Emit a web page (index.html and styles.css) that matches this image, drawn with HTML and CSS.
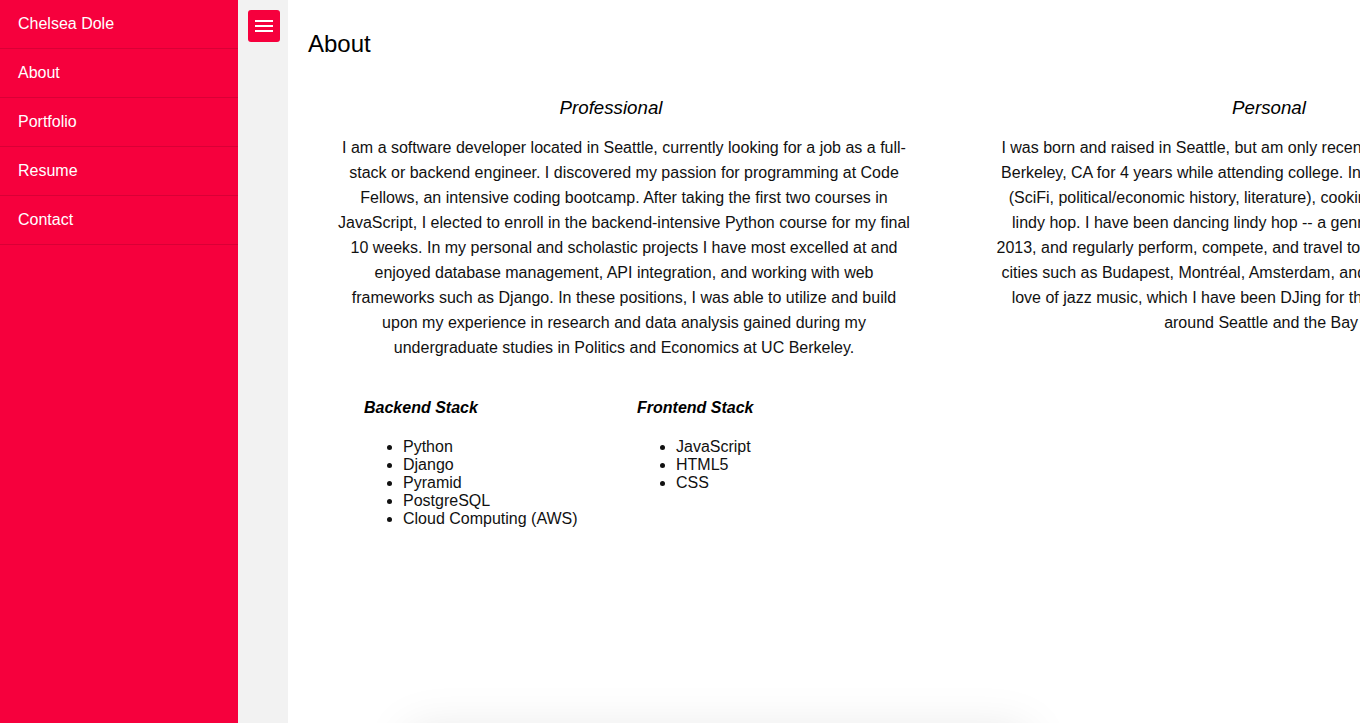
FILE: index.html
```html
<!DOCTYPE html>
<html lang="en">
<head>
<meta charset="utf-8">
<title>Chelsea Dole - About</title>
<link rel="stylesheet" href="styles.css">
</head>
<body>
<div class="layout">
  <nav class="sidebar">
    <a class="nav-item" href="#">Chelsea Dole</a>
    <a class="nav-item" href="#">About</a>
    <a class="nav-item" href="#">Portfolio</a>
    <a class="nav-item" href="#">Resume</a>
    <a class="nav-item" href="#">Contact</a>
  </nav>
  <div class="gutter">
    <button class="menu-btn" aria-label="Menu">
      <span class="bar"></span>
      <span class="bar"></span>
      <span class="bar"></span>
    </button>
  </div>
  <main class="main">
    <h1 class="page-title">About</h1>
    <div class="columns">
      <section class="column">
        <h3 class="column-title">Professional</h3>
        <p class="column-text">I am a software developer located in Seattle, currently looking for a job as a full-stack or backend engineer. I discovered my passion for programming at Code Fellows, an intensive coding bootcamp. After taking the first two courses in JavaScript, I elected to enroll in the backend-intensive Python course for my final 10 weeks. In my personal and scholastic projects I have most excelled at and enjoyed database management, API integration, and working with web frameworks such as Django. In these positions, I was able to utilize and build upon my experience in research and data analysis gained during my undergraduate studies in Politics and Economics at UC Berkeley.</p>
        <div class="stacks">
          <div class="stack">
            <h4 class="stack-title">Backend Stack</h4>
            <ul class="stack-list">
              <li>Python</li>
              <li>Django</li>
              <li>Pyramid</li>
              <li>PostgreSQL</li>
              <li>Cloud Computing (AWS)</li>
            </ul>
          </div>
          <div class="stack">
            <h4 class="stack-title">Frontend Stack</h4>
            <ul class="stack-list">
              <li>JavaScript</li>
              <li>HTML5</li>
              <li>CSS</li>
            </ul>
          </div>
        </div>
      </section>
      <section class="column">
        <h3 class="column-title">Personal</h3>
        <p class="column-text">I was born and raised in Seattle, but am only recently moved back after living in Berkeley, CA for 4 years while attending college. In my free time I enjoy reading (SciFi, political/economic history, literature), cooking, traveling, and especially lindy hop. I have been dancing lindy hop -- a genre of swing dancing -- since 2013, and regularly perform, compete, and travel to swing dance festivals held in cities such as Budapest, Montréal, Amsterdam, and New Orleans. I also have a love of jazz music, which I have been DJing for the past five years at dances around Seattle and the Bay Area.</p>
      </section>
    </div>
    <section class="next-card"></section>
  </main>
</div>
</body>
</html>
```
FILE: styles.css
```css
html, body {
  margin: 0;
  padding: 0;
}

body {
  font-family: "Liberation Sans", Helvetica, Arial, sans-serif;
  color: #111;
  background: #fff;
  overflow: hidden;
}

.layout {
  display: flex;
  min-height: 100vh;
}

.sidebar {
  width: 238px;
  flex-shrink: 0;
  background: #f6003d;
  display: flex;
  flex-direction: column;
}

.nav-item {
  display: block;
  padding: 15px 18px;
  line-height: 18px;
  font-size: 16px;
  color: #fff;
  text-decoration: none;
  border-bottom: 1px solid #d90036;
}

.gutter {
  width: 50px;
  flex-shrink: 0;
  background: #f2f2f2;
  padding: 10px 0 0 10px;
  box-sizing: border-box;
}

.menu-btn {
  width: 32px;
  height: 32px;
  border: 0;
  border-radius: 3px;
  background: #f6003d;
  padding: 10px 0 0 7px;
  display: flex;
  flex-direction: column;
  gap: 3px;
  box-sizing: border-box;
  cursor: pointer;
}

.bar {
  display: block;
  width: 18px;
  height: 2px;
  background: #fff;
}

.main {
  flex: 1;
  min-width: 0;
  overflow: hidden;
  padding: 30px 0 0 20px;
}

.page-title {
  margin: 0;
  font-size: 24px;
  line-height: 28px;
  font-weight: normal;
  color: #000;
}

.columns {
  display: flex;
  gap: 52px;
  margin-top: 39px;
  align-items: flex-start;
}

.column {
  width: 606px;
  flex-shrink: 0;
}

.column-title {
  margin: 0;
  font-size: 18.72px;
  line-height: 22px;
  font-style: italic;
  font-weight: normal;
  text-align: center;
  color: #000;
}

.column-text {
  margin: 16px 0 0 26px;
  width: 580px;
  font-size: 16px;
  line-height: 25px;
  text-align: center;
}

.stacks {
  display: flex;
  margin-top: 39px;
  padding-left: 56px;
}

.stack {
  width: 273px;
}

.stack-title {
  margin: 0;
  font-size: 16px;
  line-height: 18px;
  font-weight: bold;
  font-style: italic;
  color: #000;
}

.stack-list {
  margin: 21px 0 0;
  padding-left: 39px;
  font-size: 16px;
  line-height: 18px;
}

.next-card {
  margin: 202px 0 0 100px;
  width: 620px;
  height: 300px;
  background: #fff;
  box-shadow: 0 0 45px rgba(0, 0, 0, 0.1);
}
```
